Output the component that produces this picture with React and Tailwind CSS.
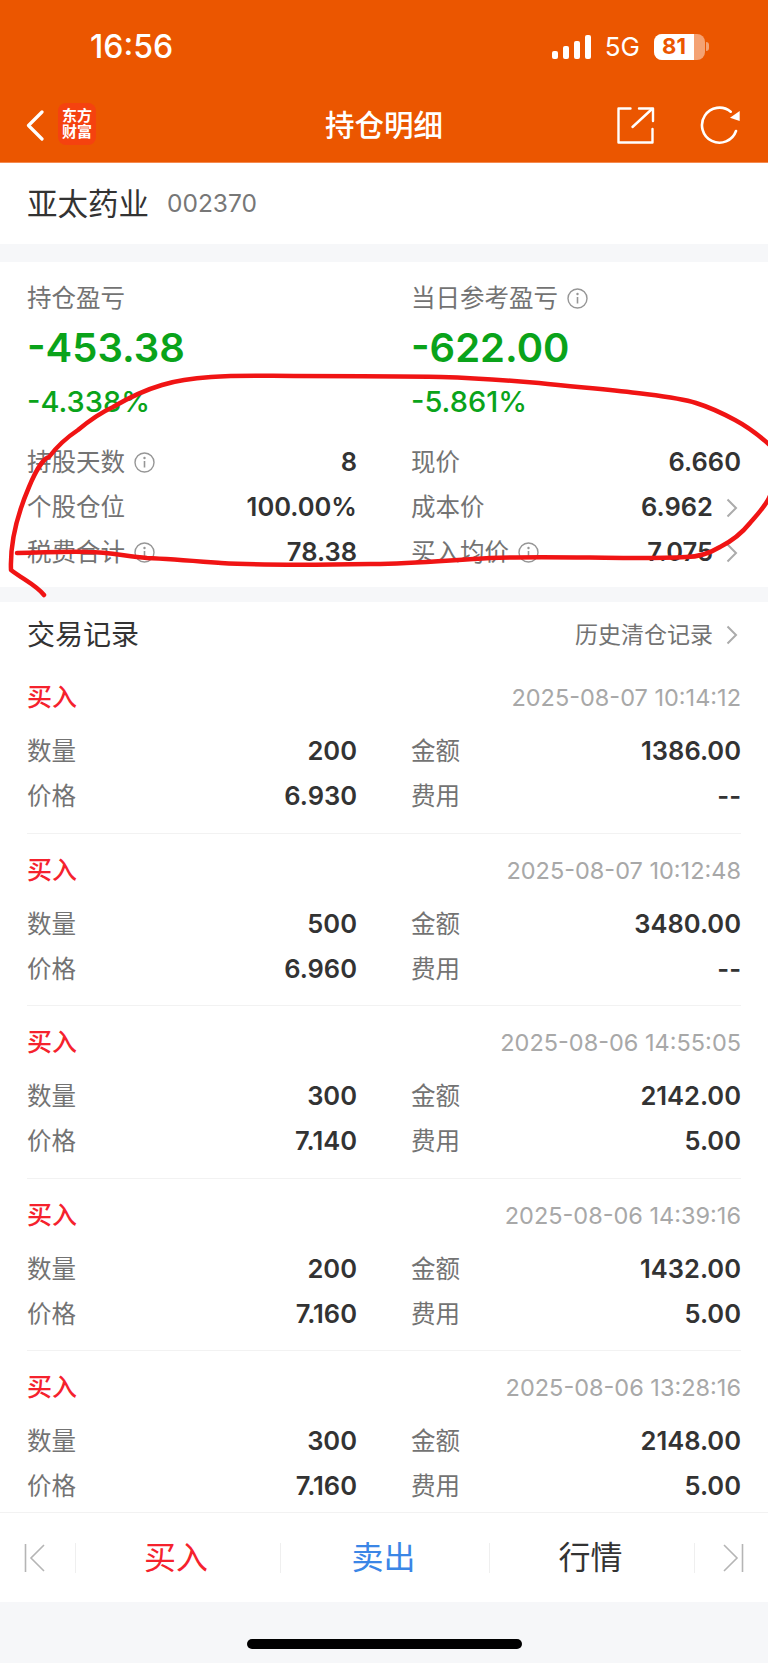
const summaryRows = [
  { label: '持股天数', info: true, value: '8', right: '现价', rightValue: '6.660' },
  { label: '个股仓位', value: '100.00%', right: '成本价', rightValue: '6.962', arrow: true },
  { label: '税费合计', info: true, value: '78.38', right: '买入均价', rightInfo: true, rightValue: '7.075', arrow: true },
];

const trades = [
  { time: '2025-08-07 10:14:12', qty: '200', amount: '1386.00', price: '6.930', fee: '--' },
  { time: '2025-08-07 10:12:48', qty: '500', amount: '3480.00', price: '6.960', fee: '--' },
  { time: '2025-08-06 14:55:05', qty: '300', amount: '2142.00', price: '7.140', fee: '5.00' },
  { time: '2025-08-06 14:39:16', qty: '200', amount: '1432.00', price: '7.160', fee: '5.00' },
  { time: '2025-08-06 13:28:16', qty: '300', amount: '2148.00', price: '7.160', fee: '5.00' },
];

function InfoIcon() {
  return (
    <svg width="21" height="21" viewBox="0 0 21 21" fill="none" stroke="#969696" className="ml-[9px] shrink-0">
      <circle cx="10.5" cy="10.5" r="9.5" strokeWidth="1.4" />
      <path d="M10.5 9v6.5" strokeWidth="1.6" />
      <circle cx="10.5" cy="6" r="0.6" strokeWidth="1.2" />
    </svg>
  );
}

function Arrow() {
  return (
    <svg width="12" height="20" viewBox="0 0 12 20" fill="none" stroke="#ababab" strokeWidth="2" className="ml-[13px] mr-[3px] shrink-0">
      <path d="M1.5 1.5 10 10l-8.5 8.5" />
    </svg>
  );
}

function Cell({ label, info, value, arrow }) {
  return (
    <div className="flex h-[45px] items-center justify-between">
      <span className="flex items-center text-[24.5px] text-[#737373]">{label}{info && <InfoIcon />}</span>
      <span className="flex items-center text-[25.5px] font-semibold text-[#333333]">{value}{arrow && <Arrow />}</span>
    </div>
  );
}

function Row({ label, value }) {
  return (
    <div className="flex h-[45px] items-center justify-between">
      <span className="text-[24.5px] text-[#737373]">{label}</span>
      <span className="text-[25.5px] font-semibold text-[#333333]">{value}</span>
    </div>
  );
}

function TradeItem({ trade, last }) {
  return (
    <div className={`h-[172.5px] pt-[7px] ${last ? '' : 'border-b border-[#f2f2f2]'}`}>
      <div className="flex h-[61px] items-center justify-between pb-[1px]">
        <span className="text-[25px] font-medium text-[#f5222d]">买入</span>
        <span className="text-[23.5px] text-[#a8a8a8]">{trade.time}</span>
      </div>
      <div className="grid grid-cols-2 gap-x-[54px]">
        <Row label="数量" value={trade.qty} />
        <Row label="金额" value={trade.amount} />
        <Row label="价格" value={trade.price} />
        <Row label="费用" value={trade.fee} />
      </div>
    </div>
  );
}

function Divider() {
  return <div className="h-[30px] w-px bg-[#efefef]" />;
}

export default function App() {
  return (
    <div className="relative flex h-[1663px] w-[768px] flex-col overflow-hidden bg-[#f6f7f9] font-[Inter,'Noto_Sans_CJK_SC',sans-serif]">
      {/* header */}
      <div className="bg-[#eb5600] text-white">
        <div className="flex h-[88px] items-center justify-between pl-[90px] pr-[59px] pt-[5px]">
          <span className="text-[32px] font-medium">16:56</span>
          <div className="flex items-center">
            <svg width="40" height="24" viewBox="0 0 40 24" fill="white">
              <rect x="0" y="16" width="6" height="8" rx="2" />
              <rect x="11" y="11" width="6" height="13" rx="2" />
              <rect x="22" y="6" width="6" height="18" rx="2" />
              <rect x="33" y="0" width="6" height="24" rx="2" />
            </svg>
            <span className="ml-[13px] text-[26px] font-normal">5G</span>
            <div className="ml-[14px] flex h-[26px] w-[51px] overflow-hidden rounded-[8px] bg-white/45">
              <div className="flex w-[40px] items-center justify-center bg-white text-[22px] font-bold text-[#eb5600]">81</div>
            </div>
            <div className="ml-[1px] h-[9px] w-[3px] rounded-r-full bg-white/45" />
          </div>
        </div>
        <div className="relative flex h-[75px] items-center justify-between border-b border-[#f58a4f] pl-[26px] pr-[27px]">
          <div className="flex items-center">
            <svg width="18" height="31" viewBox="0 0 18 31" fill="none" stroke="white" strokeWidth="3.2" strokeLinecap="round" strokeLinejoin="round">
              <path d="M16 2 2.5 15.5 16 29" />
            </svg>
            <div className="ml-[14px] mt-[-2px] flex h-[42px] w-[38px] flex-col items-center justify-center rounded-[8px] bg-[#f5420f] text-[15px] font-bold leading-[16px]">
              <span>东方</span>
              <span>财富</span>
            </div>
          </div>
          <span className="absolute left-[325px] text-[29.5px] font-medium">持仓明细</span>
          <div className="flex items-center">
            <svg width="38" height="37" viewBox="0 0 38 37" fill="none" stroke="white" strokeWidth="2.4" strokeLinecap="round" strokeLinejoin="round">
              <path d="M13.5 1.5H1.5v34h34V22" />
              <path d="M15.5 20 35 2" />
              <path d="M22 1.5h14V14" />
            </svg>
            <svg width="41" height="39" viewBox="0 0 41 39" fill="none" className="ml-[45px]">
              <path d="M30.7 5.7A17.5 17.5 0 1 0 36 25" stroke="white" strokeWidth="2.6" strokeLinecap="round" />
              <path d="M39.7 5v10L30 11.7z" fill="white" />
            </svg>
          </div>
        </div>
      </div>

      {/* stock name */}
      <div className="flex h-[81px] items-center bg-white px-[27px]">
        <span className="text-[30.5px] text-[#333333]">亚太药业</span>
        <span className="ml-[18px] text-[24.5px] text-[#777777]">002370</span>
      </div>

      {/* summary */}
      <div className="mt-[18px] h-[325px] bg-white px-[27px] pt-[18px]">
        <div className="grid grid-cols-2 gap-x-[54px]">
          <div>
            <div className="flex h-[36px] items-center text-[24.5px] text-[#737373]">持仓盈亏</div>
            <div className="flex h-[64px] items-center text-[40px] font-semibold text-[#0aa31a]">-453.38</div>
            <div className="flex h-[44px] items-center text-[29px] font-medium text-[#0aa31a]">-4.338%</div>
          </div>
          <div>
            <div className="flex h-[36px] items-center text-[24.5px] text-[#737373]">当日参考盈亏<InfoIcon /></div>
            <div className="flex h-[64px] items-center text-[40px] font-semibold text-[#0aa31a]">-622.00</div>
            <div className="flex h-[44px] items-center text-[29px] font-medium text-[#0aa31a]">-5.861%</div>
          </div>
        </div>
        <div className="mt-[16px] grid grid-cols-2 gap-x-[54px]">
          {summaryRows.map((row) => [
            <Cell key={row.label} label={row.label} info={row.info} value={row.value} />,
            <Cell key={row.right} label={row.right} info={row.rightInfo} value={row.rightValue} arrow={row.arrow} />,
          ])}
        </div>
      </div>

      {/* trade records */}
      <div className="mt-[15px] min-h-0 flex-1 overflow-hidden bg-white px-[27px]">
        <div className="flex h-[59px] items-center justify-between pt-[7px]">
          <span className="text-[28px] text-[#333333]">交易记录</span>
          <span className="flex items-center text-[23px] text-[#737373]">历史清仓记录<Arrow /></span>
        </div>
        {trades.map((trade, i) => (
          <TradeItem key={trade.time} trade={trade} last={i === trades.length - 1} />
        ))}
      </div>

      {/* bottom actions */}
      <div className="flex h-[90px] items-center border-t border-[#f2f2f2] bg-white">
        <div className="flex w-[75px] justify-start pl-[24px]">
          <svg width="22" height="28" viewBox="0 0 22 28" fill="none" stroke="#b5b5b5" strokeWidth="1.6">
            <path d="M1.5 0v28" />
            <path d="M20 1 7 14l13 13" />
          </svg>
        </div>
        <Divider />
        <button className="w-[204px] pr-[4px] text-center text-[32px] text-[#f5222d]">买入</button>
        <Divider />
        <button className="w-[208px] pr-[3px] text-center text-[32px] text-[#3b86e6]">卖出</button>
        <Divider />
        <button className="w-[204px] pr-[3px] text-center text-[32px] text-[#333333]">行情</button>
        <Divider />
        <div className="flex flex-1 justify-end pr-[24px]">
          <svg width="22" height="28" viewBox="0 0 22 28" fill="none" stroke="#b5b5b5" strokeWidth="1.6">
            <path d="M20.5 0v28" />
            <path d="M2 1l13 13L2 27" />
          </svg>
        </div>
      </div>

      {/* home indicator */}
      <div className="flex h-[61px] items-start justify-center bg-[#f6f7f9] pt-[37px]">
        <div className="h-[10px] w-[275px] rounded-full bg-black" />
      </div>

      {/* hand-drawn red circle */}
      <svg className="absolute left-0 top-0 pointer-events-none" width="768" height="1663" fill="none">
        <path
          d="M44 595C36 585 24 580 11 570C10 545 17 515 29 487C36 470 44 458 49 457C58 445 66 438 78 430C90 420 100 413 113 407C130 397 145 390 162 385C178 380 195 378 211 377C240 375 265 376 294 376C345 376 395 376 441 377C475 378 505 380 539 383C575 387 605 389 637 393C660 396 680 398 696 403C712 408 722 413 735 420C750 428 760 436 772 447C776 465 776 485 768 500C762 510 757 515 750 523C742 533 732 541 720 547C710 553 698 557 686 557C668 558 655 558 637 558C590 558 540 556 490 558C450 560 415 564 373 564C320 565 270 566 221 563C195 561 170 559 147 558C125 556 108 552 88 552C65 551 40 553 17 553"
          stroke="#f01414"
          strokeWidth="4.5"
          strokeLinecap="round"
          strokeLinejoin="round"
        />
      </svg>
    </div>
  );
}
